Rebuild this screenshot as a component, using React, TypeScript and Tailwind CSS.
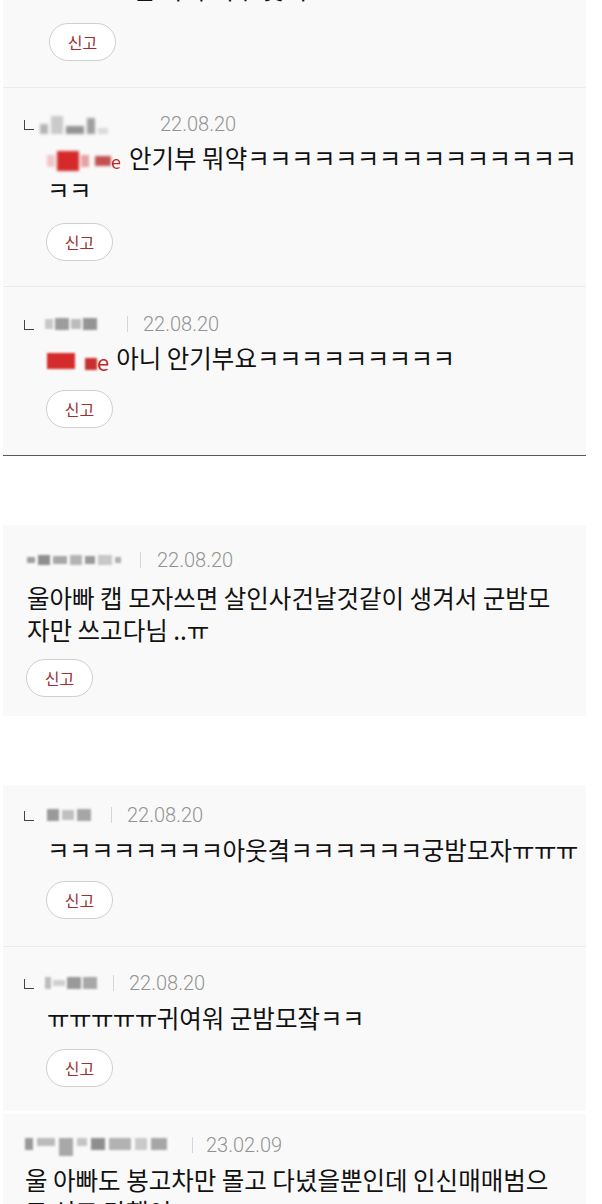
const kr = "font-['Noto_Sans_CJK_KR','Noto_Sans',sans-serif]"

function ReportButton({ className = "" }: { className?: string }) {
  return (
    <div
      className={`flex h-[38px] w-[67px] items-center justify-center rounded-full border border-[#cfcfcf] bg-white text-[16px] text-[#9c2f2f] ${kr} ${className}`}
    >
      신고
    </div>
  )
}

function DateText({ children }: { children: string }) {
  return (
    <span className="font-['Roboto','Liberation_Sans',sans-serif] text-[20px] font-light leading-[24px] text-[#939393]">
      {children}
    </span>
  )
}

function Sep({ className = "" }: { className?: string }) {
  return <span className={`inline-block h-[16px] w-px bg-[#d6d6d6] ${className}`} />
}

function Reply() {
  return (
    <span className="flex w-[16px] items-center pt-[2px]">
      <span className="h-[10px] w-[10px] border-b border-l border-[#444]" />
    </span>
  )
}

// jamo runs (ㅋㅋ, ㅠㅠ) sit a bit tighter than full syllables in the original font
function J({ children }: { children: string }) {
  return <span className="tracking-[-0.6px]">{children}</span>
}

// blurred nick names, the original picture has them pixelated
function GrayName({ variant }: { variant: number }) {
  if (variant === 1)
    return (
      <span className="flex h-[20px] w-[70px] items-end gap-[3px] blur-[1.5px]">
        <span className="h-[10px] w-[8px] bg-[#b5b5b5]" />
        <span className="h-[18px] w-[12px] bg-[#cacaca]" />
        <span className="h-[8px] w-[18px] bg-[#949494]" />
        <span className="h-[16px] w-[8px] bg-[#a0a0a0]" />
        <span className="h-[6px] w-[10px] bg-[#dadada]" />
      </span>
    )
  if (variant === 2)
    return (
      <span className="flex h-[14px] w-[55px] items-center gap-[2px] blur-[1.2px]">
        <span className="h-[10px] w-[8px] bg-[#c8c8c8]" />
        <span className="h-[12px] w-[14px] bg-[#9d9d9d]" />
        <span className="h-[10px] w-[10px] bg-[#bcbcbc]" />
        <span className="h-[12px] w-[14px] bg-[#959595]" />
      </span>
    )
  if (variant === 3)
    return (
      <span className="flex h-[14px] w-[98px] items-center gap-[3px] blur-[1px]">
        <span className="h-[6px] w-[8px] bg-[#a0a0a0]" />
        <span className="h-[10px] w-[12px] bg-[#8e8e8e]" />
        <span className="h-[8px] w-[14px] bg-[#a8a8a8]" />
        <span className="h-[10px] w-[12px] bg-[#b4b4b4]" />
        <span className="h-[8px] w-[10px] bg-[#9a9a9a]" />
        <span className="h-[10px] w-[14px] bg-[#c8c8c8]" />
        <span className="h-[6px] w-[6px] bg-[#b0b0b0]" />
      </span>
    )
  if (variant === 4)
    return (
      <span className="flex h-[14px] w-[48px] items-center gap-[3px] blur-[1px]">
        <span className="h-[12px] w-[12px] bg-[#9a9a9a]" />
        <span className="h-[10px] w-[12px] bg-[#c0c0c0]" />
        <span className="h-[12px] w-[14px] bg-[#a6a6a6]" />
      </span>
    )
  if (variant === 5)
    return (
      <span className="flex h-[14px] w-[55px] items-center gap-[2px] blur-[1px]">
        <span className="h-[12px] w-[6px] bg-[#bdbdbd]" />
        <span className="h-[6px] w-[12px] bg-[#d0d0d0]" />
        <span className="h-[12px] w-[14px] bg-[#9a9a9a]" />
        <span className="h-[12px] w-[14px] bg-[#a8a8a8]" />
      </span>
    )
  return (
    <span className="flex h-[22px] w-[150px] items-start gap-[4px] blur-[1.2px]">
      <span className="mt-[4px] h-[12px] w-[8px] bg-[#999]" />
      <span className="mt-[4px] h-[8px] w-[18px] bg-[#bbb]" />
      <span className="mt-[4px] h-[18px] w-[14px] bg-[#a8a8a8]" />
      <span className="mt-[4px] h-[8px] w-[10px] bg-[#c4c4c4]" />
      <span className="mt-[4px] h-[12px] w-[14px] bg-[#8f8f8f]" />
      <span className="mt-[4px] h-[12px] w-[22px] bg-[#b2b2b2]" />
      <span className="mt-[4px] h-[12px] w-[12px] bg-[#c9c9c9]" />
      <span className="mt-[4px] h-[12px] w-[16px] bg-[#a6a6a6]" />
    </span>
  )
}

function RedName({ variant }: { variant: number }) {
  if (variant === 1)
    return (
      <span className="mr-[8px] inline-flex items-center align-middle">
        <span className="flex h-[22px] items-center gap-[2px] blur-[1.5px]">
          <span className="h-[12px] w-[8px] bg-[#f0c8c8]" />
          <span className="h-[20px] w-[22px] bg-[#d42a2a]" />
          <span className="h-[12px] w-[8px] bg-[#e8a0a0]" />
          <span className="ml-[4px] h-[10px] w-[16px] bg-[#c45050]" />
        </span>
        <span className={`text-[18px] leading-none text-[#c02828] ${kr} blur-[0.6px]`}>e</span>
      </span>
    )
  return (
    <span className="mr-[7px] inline-flex items-center align-middle">
      <span className="flex h-[22px] items-center gap-[2px] blur-[1px]">
        <span className="h-[16px] w-[28px] bg-[#d52b2b]" />
        <span className="ml-[8px] mt-[6px] h-[12px] w-[12px] bg-[#c83030]" />
      </span>
      <span className={`text-[22px] leading-none text-[#c02828] ${kr}`}>e</span>
    </span>
  )
}

function Body({ children, className = "" }: { children: React.ReactNode; className?: string }) {
  return (
    <p className={`text-[24.5px] leading-[32px] text-[#111] ${kr} ${className}`}>
      {children}
    </p>
  )
}

export default function App() {
  return (
    <div className="flex min-h-screen flex-col overflow-hidden bg-white">
      {/* reply thread, top is cut off */}
      <div className="-mt-[24px] ml-[3px] w-[583px] bg-[#f9f9f9]">
        <div className="border-b border-[#ececec] pb-[26px] pl-[44px]">
          <div className="-mt-[3px] flex h-[32px] items-center">
            <span className="flex h-[18px] items-center gap-[2px] blur-[1.5px]">
              <span className="h-[14px] w-[20px] bg-[#d65a5a]" />
              <span className="h-[14px] w-[30px] bg-[#e08a8a]" />
              <span className="h-[14px] w-[18px] bg-[#e6b0b0]" />
            </span>
            <span className={`ml-[14px] text-[24.5px] text-[#111] ${kr}`}>말 아빠 너무 웃겨</span>
          </div>
          <ReportButton className="ml-[2px] mt-[18px]" />
        </div>

        <div className="border-b border-[#ececec] pb-[25px] pl-[21px] pr-[3px] pt-[24px]">
          <div className="flex h-[24px] items-center">
            <Reply />
            <GrayName variant={1} />
            <span className="ml-[50px]">
              <DateText>22.08.20</DateText>
            </span>
          </div>
          <Body className="ml-[23px] mt-[6px]">
            <RedName variant={1} />
            안기부 뭐약<J>ㅋㅋㅋㅋㅋㅋㅋㅋㅋㅋㅋㅋㅋㅋㅋㅋㅋ</J>
          </Body>
          <ReportButton className="ml-[22px] mt-[17px]" />
        </div>

        <div className="border-b border-[#5a5a5a] pb-[27px] pl-[21px] pt-[25px]">
          <div className="flex h-[24px] items-center">
            <Reply />
            <span className="ml-[5px]">
              <GrayName variant={2} />
            </span>
            <Sep className="ml-[27px]" />
            <span className="ml-[15px]">
              <DateText>22.08.20</DateText>
            </span>
          </div>
          <Body className="ml-[23px] mt-[6px]">
            <RedName variant={2} />
            아니 안기부요<J>ㅋㅋㅋㅋㅋㅋㅋㅋㅋ</J>
          </Body>
          <ReportButton className="ml-[22px] mt-[16px]" />
        </div>
      </div>

      <div className="h-[69px] shrink-0" />

      <div className="ml-[3px] w-[583px] bg-[#f9f9f9] pb-[19px] pl-[23px] pr-[16px] pt-[23px]">
        <div className="flex h-[24px] items-center">
          <span className="ml-[1px]">
            <GrayName variant={3} />
          </span>
          <Sep className="ml-[15px]" />
          <span className="ml-[16px]">
            <DateText>22.08.20</DateText>
          </span>
        </div>
        <Body className="ml-[1px] mt-[10px]">
          울아빠 캡 모자쓰면 살인사건날것같이 생겨서 군밤모자만 쓰고다님 ..<J>ㅠ</J>
        </Body>
        <ReportButton className="mt-[13px]" />
      </div>

      <div className="h-[69px] shrink-0" />

      <div className="ml-[3px] w-[583px] bg-[#f9f9f9]">
        <div className="border-b border-[#ececec] pb-[27px] pl-[21px] pt-[18px]">
          <div className="flex h-[24px] items-center">
            <Reply />
            <span className="ml-[7px]">
              <GrayName variant={4} />
            </span>
            <Sep className="ml-[16px]" />
            <span className="ml-[15px]">
              <DateText>22.08.20</DateText>
            </span>
          </div>
          <Body className="ml-[23px] mt-[7px]">
            <J>ㅋㅋㅋㅋㅋㅋㅋㅋ</J>아웃곀<J>ㅋㅋㅋㅋㅋㅋ</J>궁밤모자<J>ㅠㅠㅠ</J>
          </Body>
          <ReportButton className="ml-[22px] mt-[15px]" />
        </div>

        <div className="pb-[24px] pl-[21px] pt-[24px]">
          <div className="flex h-[24px] items-center">
            <Reply />
            <span className="ml-[5px]">
              <GrayName variant={5} />
            </span>
            <Sep className="ml-[13px]" />
            <span className="ml-[15px]">
              <DateText>22.08.20</DateText>
            </span>
          </div>
          <Body className="ml-[23px] mt-[7px]">
            <J>ㅠㅠㅠㅠㅠ</J>귀여워 군밤모잨<J>ㅋㅋ</J>
          </Body>
          <ReportButton className="ml-[22px] mt-[15px]" />
        </div>
      </div>

      <div className="h-[3px] shrink-0" />

      <div className="ml-[3px] w-[583px] bg-[#f9f9f9] pb-[30px] pl-[22px] pr-[20px] pt-[19px]">
        <div className="flex h-[24px] items-center">
          <GrayName variant={6} />
          <Sep className="ml-[17px]" />
          <span className="ml-[13px]">
            <DateText>23.02.09</DateText>
          </span>
        </div>
        <Body className="mt-[7px]">울 아빠도 봉고차만 몰고 다녔을뿐인데 인신매매범으로 신고 당했어</Body>
      </div>
    </div>
  )
}
